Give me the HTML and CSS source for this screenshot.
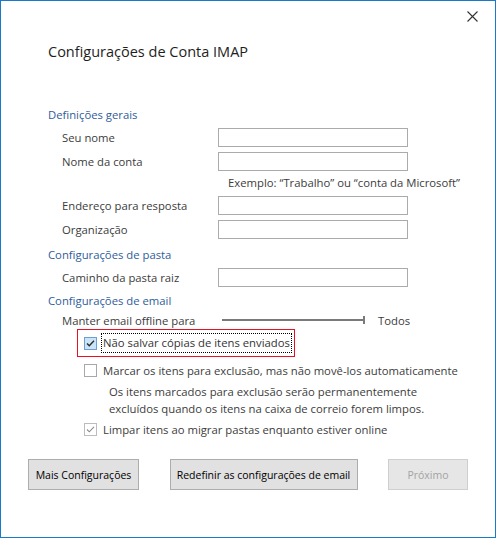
FILE: index.html
```html
<!DOCTYPE html>
<html lang="pt">
<head>
<meta charset="utf-8">
<title>Configurações de Conta IMAP</title>
<link rel="stylesheet" href="styles.css">
</head>
<body>
<div class="window">
  <div class="titlebar">
    <span class="close" aria-label="Fechar">
      <svg width="11" height="11" viewBox="0 0 11 11"><path d="M0.5 0.5 L10.5 10.5 M10.5 0.5 L0.5 10.5" stroke="#333" stroke-width="1.1" fill="none"/></svg>
    </span>
  </div>
  <h1 class="title">Configurações de Conta IMAP</h1>
  <div class="content">
    <div class="heading">Definições gerais</div>
    <div class="row"><span class="label">Seu nome</span><span class="input"></span></div>
    <div class="row"><span class="label">Nome da conta</span><span class="input"></span></div>
    <div class="hint">Exemplo: “Trabalho” ou “conta da Microsoft”</div>
    <div class="row"><span class="label">Endereço para resposta</span><span class="input"></span></div>
    <div class="row"><span class="label">Organização</span><span class="input"></span></div>

    <div class="heading heading-pasta">Configurações de pasta</div>
    <div class="row"><span class="label">Caminho da pasta raiz</span><span class="input"></span></div>

    <div class="heading heading-email">Configurações de email</div>
    <div class="slider-row">
      <span class="label slider-label">Manter email offline para</span>
      <span class="track"></span><span class="tick"></span>
      <span class="slider-value">Todos</span>
    </div>
    <div class="highlight">
      <span class="check check-on">
        <svg width="11" height="11" viewBox="0 0 11 11"><path d="M2 5.5 L4.3 7.8 L9 2.8" stroke="#2b2b2b" stroke-width="1.4" fill="none"/></svg>
      </span>
      <span class="focus-label">Não salvar cópias de itens enviados</span>
    </div>
    <div class="check-row check-first"><span class="check"></span><span class="check-text">Marcar os itens para exclusão, mas não movê-los automaticamente</span></div>
    <div class="desc">Os itens marcados para exclusão serão permanentemente<br>excluídos quando os itens na caixa de correio forem limpos.</div>
    <div class="check-row"><span class="check check-dim">
        <svg width="11" height="11" viewBox="0 0 11 11"><path d="M2 5.5 L4.3 7.8 L9 2.8" stroke="#8c8c8c" stroke-width="1.1" fill="none"/></svg>
      </span><span class="check-text">Limpar itens ao migrar pastas enquanto estiver online</span></div>
  </div>
  <div class="buttons">
    <button class="btn btn-more">Mais Configurações</button>
    <button class="btn btn-reset">Redefinir as configurações de email</button>
    <button class="btn btn-next" disabled>Próximo</button>
  </div>
</div>
</body>
</html>
```
FILE: styles.css
```css
html, body {
  margin: 0;
  padding: 0;
  background: #ffffff;
}
body {
  font-family: "Open Sans", "Noto Sans", sans-serif;
  font-size: 11.3px;
  color: #3c3c3c;
}
.window {
  width: 494px;
  height: 536px;
  border: 1px solid #1979ca;
  display: flex;
  flex-direction: column;
  background: #ffffff;
}
.titlebar {
  height: 31px;
  box-sizing: border-box;
  padding: 10px 17px 0 0;
  display: flex;
  justify-content: flex-end;
  align-items: flex-start;
}
.close {
  display: block;
  width: 11px;
  height: 11px;
}
.close svg {
  display: block;
}
.title {
  margin: 10px 0 0 47px;
  font-size: 14.5px;
  line-height: 20px;
  font-weight: normal;
  color: #1e1e1e;
}
.content {
  margin-top: 43px;
  padding-left: 47px;
  display: flex;
  flex-direction: column;
}
.heading {
  height: 20px;
  line-height: 20px;
  color: #2f5d9b;
}
.heading-pasta {
  margin-top: 4px;
}
.heading-email {
  margin-top: 2px;
}
.row {
  height: 24px;
  display: flex;
  align-items: center;
  padding-left: 14px;
}
.label {
  width: 156px;
  flex: none;
  white-space: nowrap;
}
.input {
  width: 190px;
  height: 19px;
  box-sizing: border-box;
  border: 1px solid #ababab;
  background: #ffffff;
}
.hint {
  height: 20px;
  line-height: 20px;
  padding-left: 180px;
  white-space: nowrap;
}
.slider-row {
  height: 18px;
  display: flex;
  align-items: center;
  padding-left: 14px;
}
.slider-label {
  width: 160px;
}
.track {
  width: 141px;
  height: 2px;
  background: #7a7a7a;
}
.tick {
  width: 2px;
  height: 8px;
  background: #7a7a7a;
}
.slider-value {
  margin-left: 13px;
}
.highlight {
  margin-left: 29px;
  width: 218px;
  height: 28px;
  box-sizing: border-box;
  border: 1px solid #e81123;
  display: flex;
  align-items: center;
  padding-left: 6px;
}
.check {
  width: 13px;
  height: 13px;
  box-sizing: border-box;
  border: 1px solid #a8a8a8;
  background: #ffffff;
  flex: none;
  display: flex;
  align-items: center;
  justify-content: center;
}
.check svg {
  display: block;
}
.check-on {
  background: #cce4f7;
  border-color: #6e9fd3;
}
.check-dim {
  border-color: #bcbcbc;
}
.focus-label {
  margin-left: 4px;
  height: 20px;
  line-height: 18px;
  box-sizing: border-box;
  border: 1px dotted #000000;
  padding: 0 1px;
  white-space: nowrap;
  color: #333333;
}
.check-row {
  height: 24px;
  display: flex;
  align-items: center;
  padding-left: 36px;
}
.check-first {
  margin-top: 1px;
}
.check-text {
  margin-left: 6px;
  white-space: nowrap;
}
.desc {
  padding-left: 61px;
  line-height: 17px;
  margin-top: 1px;
}
.buttons {
  margin-top: 18px;
  padding: 0 27px;
  display: flex;
  justify-content: space-between;
}
.btn {
  height: 31px;
  box-sizing: border-box;
  border: 1px solid #adadad;
  background: #e1e1e1;
  font-family: inherit;
  font-size: 10.5px;
  color: #000000;
  padding: 0;
  white-space: nowrap;
}
.btn-more {
  width: 111px;
}
.btn-reset {
  width: 188px;
}
.btn-next {
  width: 80px;
  background: #e6e6e6;
  border-color: #cfcfcf;
  color: #a3a3a3;
}
```
